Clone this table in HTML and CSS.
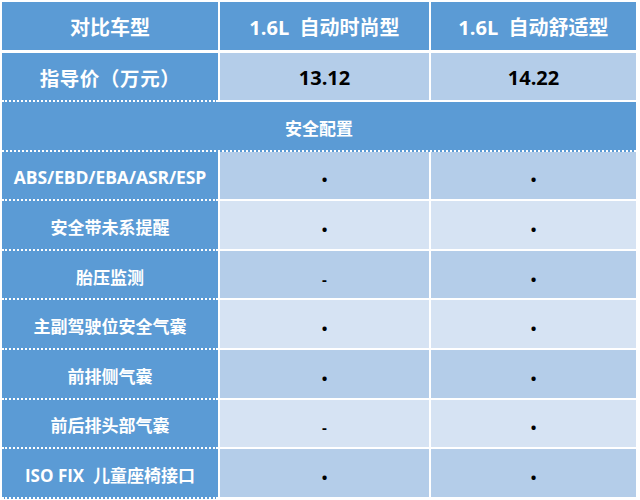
FILE: index.html
```html
<!DOCTYPE html>
<html lang="zh-CN">
<head>
<meta charset="utf-8">
<title>对比车型</title>
<link rel="stylesheet" href="styles.css">
</head>
<body>
<div class="table">
  <div class="row head">
    <div class="cell label">对比车型</div>
    <div class="cell">1.6L&nbsp; 自动时尚型</div>
    <div class="cell">1.6L&nbsp; 自动舒适型</div>
  </div>
  <div class="row price odd">
    <div class="cell label">指导价（万元）</div>
    <div class="cell val">13.12</div>
    <div class="cell val">14.22</div>
  </div>
  <div class="row section">
    <div class="cell span">安全配置</div>
  </div>
  <div class="row odd">
    <div class="cell label latin">ABS/EBD/EBA/ASR/ESP</div>
    <div class="cell mark">•</div>
    <div class="cell mark">•</div>
  </div>
  <div class="row even">
    <div class="cell label">安全带未系提醒</div>
    <div class="cell mark">•</div>
    <div class="cell mark">•</div>
  </div>
  <div class="row odd">
    <div class="cell label">胎压监测</div>
    <div class="cell mark">-</div>
    <div class="cell mark">•</div>
  </div>
  <div class="row even">
    <div class="cell label">主副驾驶位安全气囊</div>
    <div class="cell mark">•</div>
    <div class="cell mark">•</div>
  </div>
  <div class="row odd">
    <div class="cell label">前排侧气囊</div>
    <div class="cell mark">•</div>
    <div class="cell mark">•</div>
  </div>
  <div class="row even">
    <div class="cell label">前后排头部气囊</div>
    <div class="cell mark">-</div>
    <div class="cell mark">•</div>
  </div>
  <div class="row odd">
    <div class="cell label">ISO FIX&nbsp; 儿童座椅接口</div>
    <div class="cell mark">•</div>
    <div class="cell mark">•</div>
  </div>
</div>
</body>
</html>
```
FILE: styles.css
```css
html, body {
  margin: 0;
  padding: 0;
  background: #ffffff;
}
body {
  font-family: "Open Sans", "Noto Sans CJK SC", sans-serif;
  font-weight: 700;
}
.table {
  margin: 2px 0 0 2px;
  width: 634px;
  display: flex;
  flex-direction: column;
}
.row {
  display: grid;
  grid-template-columns: 216px 209px 205px;
  column-gap: 2px;
  height: 49.6px;
}
.cell {
  display: flex;
  align-items: center;
  justify-content: center;
  box-sizing: border-box;
  border-bottom: 2px solid #ffffff;
  color: #ffffff;
  font-size: 17px;
  white-space: nowrap;
  padding-top: 3px;
}
.label {
  background: #5b9bd5;
  border-bottom: 2px dotted #ffffff;
}
.latin {
  font-size: 17.5px;
  letter-spacing: -0.1px;
}
.head .cell {
  background: #5b9bd5;
  font-size: 20px;
  border-bottom: 3px solid #ffffff;
  padding-top: 2px;
}
.head {
  height: 50.5px;
}
.price .label {
  font-size: 19.5px;
  letter-spacing: 0.6px;
}
.price .val {
  color: #000000;
  font-size: 20px;
}
.odd .cell:not(.label) {
  background: #b4cde9;
}
.even .cell:not(.label) {
  background: #d6e3f3;
}
.section {
  grid-template-columns: 1fr;
}
.span {
  background: #5b9bd5;
  border-bottom: 2px dotted #ffffff;
  font-size: 17px;
  padding-top: 4px;
}
.mark {
  color: #000000;
  font-size: 15px;
  font-weight: 700;
  padding-top: 8px;
}
```
